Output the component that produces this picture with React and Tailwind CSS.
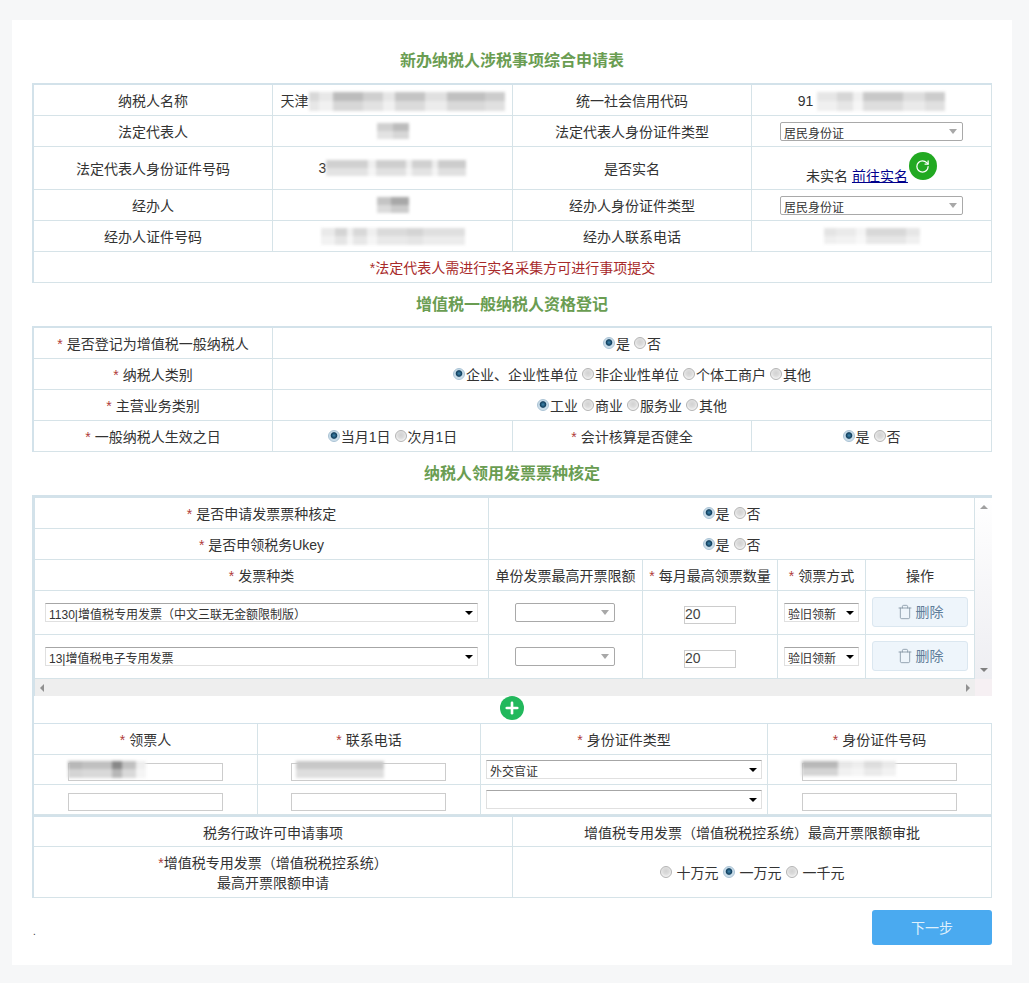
import React from "react";
import { RotateCw, Trash, Plus } from "lucide-react";

const td = "border-r border-b border-[#d6e3e8] p-0 text-center align-middle";
const tx = td + " pt-[2px]";

function Req({ children }) {
  return (
    <>
      <span className="text-[#b03a3a]">*</span> {children}
    </>
  );
}

function Radio({ checked }) {
  return checked ? (
    <span className="inline-block h-[12px] w-[12px] shrink-0 rounded-full border border-[#a9c2d4] bg-[radial-gradient(circle_at_50%_45%,#3f86ad_0,#123f5e_38%,#c3d8e6_50%,#e4eef5_100%)]" />
  ) : (
    <span className="inline-block h-[12px] w-[12px] shrink-0 rounded-full border border-[#b4b4b4] bg-[radial-gradient(circle_at_50%_40%,#d2d2d2_0,#dcdcdc_40%,#f0f0f0_70%,#f8f8f8_100%)]" />
  );
}

function Radios({ items, wide }) {
  return (
    <div className="flex items-center justify-center gap-[4px]">
      {items.map(([label, checked]) => (
        <label key={label} className={wide ? "flex items-center gap-[5px]" : "flex items-center gap-[1px]"}>
          <Radio checked={checked} />
          <span className="pt-[2px]">{label}</span>
        </label>
      ))}
    </div>
  );
}

function Blur({ cells, h }) {
  return (
    <span className="relative flex blur-[1.8px]" style={{ height: h }}>
      {cells.map(([w, c], i) => (
        <span key={i} style={{ width: w, background: c }} />
      ))}
      <span className="absolute bottom-0 left-0 h-1/2 w-full bg-white/40" />
    </span>
  );
}

function Select({ value, w, soft, options }) {
  return (
    <div
      className={
        soft
          ? "relative h-[19px] rounded-[2px] border border-[#a9a9a9] bg-white"
          : "relative h-[19px] border border-[#e0e0e0] border-t-[#a6a6a6] bg-white"
      }
      style={{ width: w }}
    >
      <select
        defaultValue={value}
        className="h-full w-full appearance-none bg-transparent pb-[2px] pl-[3px] text-[12px] leading-[15px] text-[#333] outline-none"
      >
        {(options || [value]).map((o) => (
          <option key={o}>{o}</option>
        ))}
      </select>
      {soft ? (
        <span className="absolute right-[5px] top-[6px] h-0 w-0 border-x-[4px] border-t-[5px] border-x-transparent border-t-[#a8a8a8]" />
      ) : (
        <span className="absolute right-[4px] top-[7px] h-0 w-0 border-x-[4px] border-t-[4px] border-x-transparent border-t-black" />
      )}
    </div>
  );
}

function Input({ value, w, h, children }) {
  return (
    <div className="relative" style={{ width: w, height: h }}>
      <input
        readOnly
        value={value || ""}
        className="h-full w-full border border-[#cccccc] bg-white px-0 pb-[2px] text-[14px] leading-none text-[#444] outline-none"
      />
      {children && <div className="absolute left-0 top-0">{children}</div>}
    </div>
  );
}

function Title({ children }) {
  return (
    <h2 className="h-[43px] text-center text-[16px] font-bold leading-[43px] text-[#6a9d52]">{children}</h2>
  );
}

function Center({ children }) {
  return <div className="flex items-center justify-center">{children}</div>;
}

function Table1() {
  return (
    <div className="border-l-2 border-t-2 border-[#d3e2ea]">
      <table className="w-[958px] table-fixed border-separate border-spacing-0">
        <colgroup>
          <col className="w-[239px]" />
          <col className="w-[240px]" />
          <col className="w-[239px]" />
          <col className="w-[240px]" />
        </colgroup>
        <tbody>
          <tr className="h-[31px]">
            <td className={tx}>纳税人名称</td>
            <td className={tx}>
              <Center>
                <span>天津</span>
                <Blur h={19} cells={[[10, "#d8d8d8"], [14, "#e8e8e8"], [30, "#bcbcbc"], [20, "#cfcfcf"], [12, "#e6e6e6"], [30, "#c4c4c4"], [22, "#e0e0e0"], [38, "#c0c0c0"], [20, "#cccccc"]]} />
              </Center>
            </td>
            <td className={tx}>统一社会信用代码</td>
            <td className={tx}>
              <Center>
                <span className="mr-[4px]">91</span>
                <Blur h={19} cells={[[20, "#e6e6e6"], [16, "#d6d6d6"], [10, "#f0f0f0"], [40, "#c8c8c8"], [22, "#dddddd"], [20, "#cccccc"]]} />
              </Center>
            </td>
          </tr>
          <tr className="h-[31px]">
            <td className={tx}>法定代表人</td>
            <td className={td}>
              <Center>
                <Blur h={16} cells={[[16, "#d0d0d0"], [16, "#bcbcbc"]]} />
              </Center>
            </td>
            <td className={tx}>法定代表人身份证件类型</td>
            <td className={td}>
              <Center>
                <Select soft w={183} value="居民身份证" />
              </Center>
            </td>
          </tr>
          <tr className="h-[43px]">
            <td className={tx}>法定代表人身份证件号码</td>
            <td className={td}>
              <Center>
                <span>3</span>
                <Blur h={16} cells={[[42, "#d0d0d0"], [8, "#efefef"], [30, "#cecece"], [6, "#eeeeee"], [20, "#d0d0d0"], [6, "#eeeeee"], [28, "#cccccc"]]} />
              </Center>
            </td>
            <td className={tx}>是否实名</td>
            <td className={td}>
              <div className="flex h-[42px] justify-center">
                <span className="mt-[19px]">
                  未实名 <a className="text-[#00008b] underline">前往实名</a>
                </span>
                <span className="ml-[1px] mt-[5px] flex h-[28px] w-[28px] items-center justify-center rounded-full bg-[#22a922]">
                  <RotateCw size={15} strokeWidth={2} className="text-white" />
                </span>
              </div>
            </td>
          </tr>
          <tr className="h-[31px]">
            <td className={tx}>经办人</td>
            <td className={td}>
              <Center>
                <Blur h={16} cells={[[14, "#c4c4c4"], [18, "#a8a8a8"]]} />
              </Center>
            </td>
            <td className={tx}>经办人身份证件类型</td>
            <td className={td}>
              <Center>
                <Select soft w={183} value="居民身份证" />
              </Center>
            </td>
          </tr>
          <tr className="h-[31px]">
            <td className={tx}>经办人证件号码</td>
            <td className={td}>
              <Center>
                <Blur h={17} cells={[[14, "#eaeaea"], [12, "#d4d4d4"], [6, "#f0f0f0"], [14, "#d8d8d8"], [10, "#efefef"], [30, "#dadada"], [16, "#d4d4d4"], [42, "#dfdfdf"]]} />
              </Center>
            </td>
            <td className={tx}>经办人联系电话</td>
            <td className={td}>
              <Center>
                <Blur h={16} cells={[[12, "#e4e4e4"], [20, "#eaeaea"], [10, "#f4f4f4"], [40, "#d8d8d8"], [14, "#e6e6e6"]]} />
              </Center>
            </td>
          </tr>
          <tr className="h-[31px]">
            <td colSpan={4} className={tx + " text-[#a82a2a]"}>
              *法定代表人需进行实名采集方可进行事项提交
            </td>
          </tr>
        </tbody>
      </table>
    </div>
  );
}

function Table2() {
  return (
    <div className="border-l-2 border-t-2 border-[#d3e2ea]">
      <table className="w-[958px] table-fixed border-separate border-spacing-0">
        <colgroup>
          <col className="w-[239px]" />
          <col className="w-[240px]" />
          <col className="w-[239px]" />
          <col className="w-[240px]" />
        </colgroup>
        <tbody>
          <tr className="h-[31px]">
            <td className={tx}><Req>是否登记为增值税一般纳税人</Req></td>
            <td colSpan={3} className={td}>
              <Radios items={[["是", true], ["否", false]]} />
            </td>
          </tr>
          <tr className="h-[31px]">
            <td className={tx}><Req>纳税人类别</Req></td>
            <td colSpan={3} className={td}>
              <Radios items={[["企业、企业性单位", true], ["非企业性单位", false], ["个体工商户", false], ["其他", false]]} />
            </td>
          </tr>
          <tr className="h-[31px]">
            <td className={tx}><Req>主营业务类别</Req></td>
            <td colSpan={3} className={td}>
              <Radios items={[["工业", true], ["商业", false], ["服务业", false], ["其他", false]]} />
            </td>
          </tr>
          <tr className="h-[31px]">
            <td className={tx}><Req>一般纳税人生效之日</Req></td>
            <td className={td}>
              <Radios items={[["当月1日", true], ["次月1日", false]]} />
            </td>
            <td className={tx}><Req>会计核算是否健全</Req></td>
            <td className={td}>
              <Radios items={[["是", true], ["否", false]]} />
            </td>
          </tr>
        </tbody>
      </table>
    </div>
  );
}

function InvoiceRow({ name }) {
  return (
    <tr className="h-[44px]">
      <td className={td}>
        <Center>
          <Select w={433} value={name} />
        </Center>
      </td>
      <td className={td}>
        <div className="flex items-center justify-center pr-[2px]">
          <Select soft w={100} value="" />
        </div>
      </td>
      <td className={td}>
        <Center>
          <Input w={52} h={18} value="20" />
        </Center>
      </td>
      <td className={td}>
        <Center>
          <Select w={75} value="验旧领新" />
        </Center>
      </td>
      <td className={td}>
        <Center>
          <button className="mb-[2px] flex h-[30px] w-[96px] items-center justify-center gap-[3px] rounded-[3px] border border-[#dbe7f0] bg-[#eef5fb] text-[#5f7d99]">
            <Trash size={16} strokeWidth={1.2} className="text-[#7f919f]" />
            删除
          </button>
        </Center>
      </td>
    </tr>
  );
}

function Table3() {
  return (
    <div className="border-l-[3px] border-t-[3px] border-[#d3e2ea]">
      <div className="flex">
        <table className="w-[940px] table-fixed border-separate border-spacing-0">
          <colgroup>
            <col className="w-[454px]" />
            <col className="w-[154px]" />
            <col className="w-[135px]" />
            <col className="w-[88px]" />
            <col className="w-[109px]" />
          </colgroup>
          <tbody>
            <tr className="h-[31px]">
              <td className={tx}><Req>是否申请发票票种核定</Req></td>
              <td colSpan={4} className={td}>
                <Radios items={[["是", true], ["否", false]]} />
              </td>
            </tr>
            <tr className="h-[31px]">
              <td className={tx}><Req>是否申领税务Ukey</Req></td>
              <td colSpan={4} className={td}>
                <Radios items={[["是", true], ["否", false]]} />
              </td>
            </tr>
            <tr className="h-[31px]">
              <td className={tx}><Req>发票种类</Req></td>
              <td className={tx}>单份发票最高开票限额</td>
              <td className={tx}><Req>每月最高领票数量</Req></td>
              <td className={tx}><Req>领票方式</Req></td>
              <td className={tx}>操作</td>
            </tr>
            <InvoiceRow name="1130|增值税专用发票（中文三联无金额限制版）" />
            <InvoiceRow name="13|增值税电子专用发票" />
          </tbody>
        </table>
        <div className="flex w-[17px] flex-col items-center justify-between bg-gradient-to-b from-white to-[#eeeef2] py-[7px]">
          <span className="h-0 w-0 border-x-[4px] border-b-[4px] border-x-transparent border-b-[#a0a0a0]" />
          <span className="h-0 w-0 border-x-[4px] border-t-[4px] border-x-transparent border-t-[#808080]" />
        </div>
      </div>
      <div className="flex h-[17px]">
        <div className="flex w-[940px] items-center justify-between bg-[#eeeeee] px-[5px]">
          <span className="h-0 w-0 border-y-[4px] border-r-[4px] border-y-transparent border-r-[#909090]" />
          <span className="h-0 w-0 border-y-[4px] border-l-[4px] border-y-transparent border-l-[#909090]" />
        </div>
        <div className="w-[17px] bg-[#f6f0f3]" />
      </div>
    </div>
  );
}

function Table4() {
  return (
    <div className="border-l-2 border-t border-[#d3e2ea]">
      <table className="w-[958px] table-fixed border-separate border-spacing-0">
        <colgroup>
          <col className="w-[224px]" />
          <col className="w-[223px]" />
          <col className="w-[287px]" />
          <col className="w-[224px]" />
        </colgroup>
        <tbody>
          <tr className="h-[31px]">
            <td className={tx}><Req>领票人</Req></td>
            <td className={tx}><Req>联系电话</Req></td>
            <td className={tx}><Req>身份证件类型</Req></td>
            <td className={tx}><Req>身份证件号码</Req></td>
          </tr>
          <tr className="h-[30px]">
            <td className={td}>
              <Center>
                <Input w={155} h={18}>
                  <Blur h={17} cells={[[14, "#b8b8b8"], [30, "#c0c0c0"], [10, "#888888"], [14, "#c0c0c0"], [10, "#efefef"]]} />
                </Input>
              </Center>
            </td>
            <td className={td}>
              <div className="flex items-center justify-center pr-[2px]">
                <Input w={155} h={18}>
                  <div className="pl-[5px]">
                    <Blur h={17} cells={[[88, "#c8c8c8"]]} />
                  </div>
                </Input>
              </div>
            </td>
            <td className={td}>
              <Center>
                <Select w={276} value="外交官证" />
              </Center>
            </td>
            <td className={td}>
              <Center>
                <Input w={155} h={18}>
                  <Blur h={15} cells={[[36, "#b8b8b8"], [14, "#e8e8e8"], [12, "#eeeeee"], [18, "#dddddd"], [14, "#eaeaea"]]} />
                </Input>
              </Center>
            </td>
          </tr>
          <tr className="h-[30px]">
            <td className={td}>
              <Center>
                <Input w={155} h={18} />
              </Center>
            </td>
            <td className={td}>
              <div className="flex items-center justify-center pr-[2px]">
                <Input w={155} h={18} />
              </div>
            </td>
            <td className={td}>
              <Center>
                <Select w={276} value="" />
              </Center>
            </td>
            <td className={td}>
              <Center>
                <Input w={155} h={18} />
              </Center>
            </td>
          </tr>
        </tbody>
      </table>
    </div>
  );
}

function Table5() {
  return (
    <div className="border-l-2 border-t-2 border-[#d3e2ea]">
      <table className="w-[958px] table-fixed border-separate border-spacing-0">
        <tbody>
          <tr className="h-[30px]">
            <td className={tx}>税务行政许可申请事项</td>
            <td className={tx}>增值税专用发票（增值税税控系统）最高开票限额审批</td>
          </tr>
          <tr className="h-[51px]">
            <td className={tx + " leading-[20px]"}>
              <span className="text-[#b03a3a]">*</span>增值税专用发票（增值税税控系统）
              <br />
              最高开票限额申请
            </td>
            <td className={td}>
              <Radios wide items={[["十万元", false], ["一万元", true], ["一千元", false]]} />
            </td>
          </tr>
        </tbody>
      </table>
    </div>
  );
}

export default function App() {
  return (
    <div className="min-h-[983px] bg-[#f6f7f8] pl-[12px] pt-[20px] text-[14px] leading-[20px] text-[#333] [font-family:'Liberation_Sans','Noto_Sans_CJK_SC',sans-serif]">
      <div className="w-[1000px] bg-white px-[20px] pb-[20px]">
        <h1 className="h-[63px] pt-[31px] text-center text-[16px] font-bold leading-[20px] text-[#6a9d52]">
          新办纳税人涉税事项综合申请表
        </h1>
        <Table1 />
        <Title>增值税一般纳税人资格登记</Title>
        <Table2 />
        <Title>纳税人领用发票票种核定</Title>
        <Table3 />
        <div className="flex h-[27px] justify-center border-l-2 border-[#d3e2ea]">
          <span className="-ml-[2px] flex h-[24px] w-[24px] items-center justify-center rounded-full bg-[#22b85c]">
            <Plus size={18} strokeWidth={3.5} className="text-white" />
          </span>
        </div>
        <Table4 />
        <Table5 />
        <div className="mt-[12px] flex h-[35px] items-end justify-between">
          <span className="pb-[6px] pl-[1px] text-[10px] leading-[14px]">.</span>
          <button className="h-[35px] w-[120px] rounded-[3px] bg-[#4aaaf0] text-[14px] text-[#dff0fc]">下一步</button>
        </div>
      </div>
    </div>
  );
}
